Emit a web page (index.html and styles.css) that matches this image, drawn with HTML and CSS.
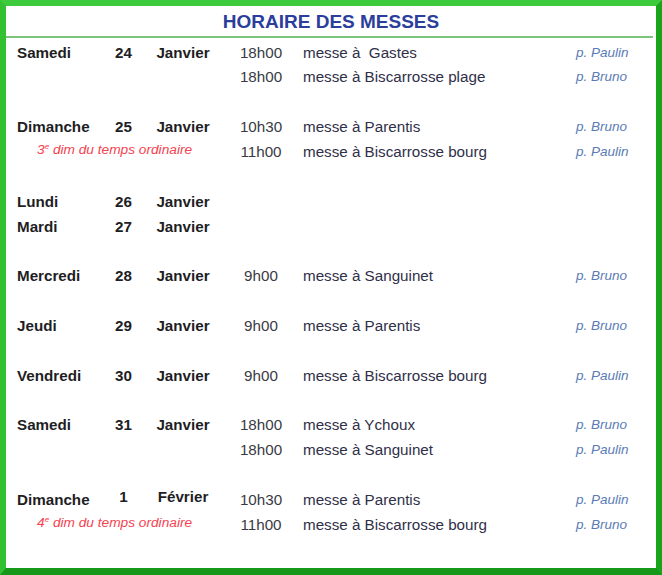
FILE: index.html
```html
<!DOCTYPE html>
<html lang="fr">
<head>
<meta charset="utf-8">
<title>Horaire des messes</title>
<link rel="stylesheet" href="styles.css">
</head>
<body>
<div class="frame">
  <h1 class="title">HORAIRE DES MESSES</h1>
  <div class="rule"></div>
  <div class="schedule">
    <div class="row"><span class="day">Samedi</span><span class="num">24</span><span class="month">Janvier</span><span class="time">18h00</span><span class="mass">messe à&nbsp; Gastes</span><span class="priest">p. Paulin</span></div>
    <div class="row"><span class="day"></span><span class="num"></span><span class="month"></span><span class="time">18h00</span><span class="mass">messe à Biscarrosse plage</span><span class="priest">p. Bruno</span></div>
    <div class="row empty"></div>
    <div class="row"><span class="day">Dimanche</span><span class="num">25</span><span class="month">Janvier</span><span class="time">10h30</span><span class="mass">messe à Parentis</span><span class="priest">p. Bruno</span></div>
    <div class="row"><span class="note">3<sup>e</sup> dim du temps ordinaire</span><span class="time">11h00</span><span class="mass">messe à Biscarrosse bourg</span><span class="priest">p. Paulin</span></div>
    <div class="row empty"></div>
    <div class="row"><span class="day">Lundi</span><span class="num">26</span><span class="month">Janvier</span></div>
    <div class="row"><span class="day">Mardi</span><span class="num">27</span><span class="month">Janvier</span></div>
    <div class="row empty"></div>
    <div class="row"><span class="day">Mercredi</span><span class="num">28</span><span class="month">Janvier</span><span class="time">9h00</span><span class="mass">messe à Sanguinet</span><span class="priest">p. Bruno</span></div>
    <div class="row empty"></div>
    <div class="row"><span class="day">Jeudi</span><span class="num">29</span><span class="month">Janvier</span><span class="time">9h00</span><span class="mass">messe à Parentis</span><span class="priest">p. Bruno</span></div>
    <div class="row empty"></div>
    <div class="row"><span class="day">Vendredi</span><span class="num">30</span><span class="month">Janvier</span><span class="time">9h00</span><span class="mass">messe à Biscarrosse bourg</span><span class="priest">p. Paulin</span></div>
    <div class="row empty"></div>
    <div class="row"><span class="day">Samedi</span><span class="num">31</span><span class="month">Janvier</span><span class="time">18h00</span><span class="mass">messe à Ychoux</span><span class="priest">p. Bruno</span></div>
    <div class="row"><span class="day"></span><span class="num"></span><span class="month"></span><span class="time">18h00</span><span class="mass">messe à Sanguinet</span><span class="priest">p. Paulin</span></div>
    <div class="row empty"></div>
    <div class="row"><span class="day">Dimanche</span><span class="num raised">1</span><span class="month raised">Février</span><span class="time">10h30</span><span class="mass">messe à Parentis</span><span class="priest">p. Paulin</span></div>
    <div class="row"><span class="note">4<sup>e</sup> dim du temps ordinaire</span><span class="time">11h00</span><span class="mass">messe à Biscarrosse bourg</span><span class="priest">p. Bruno</span></div>
  </div>
</div>
</body>
</html>
```

FILE: styles.css
```css
html, body {
  margin: 0;
  padding: 0;
  background: #ffffff;
}

.frame {
  width: 662px;
  height: 575px;
  box-sizing: border-box;
  border-style: solid;
  border-width: 6px 6px 7px 6px;
  border-color: #3dcb3d #1aa41a #16981a #33c133;
  background: #ffffff;
  font-family: "Liberation Sans", Arial, sans-serif;
  overflow: hidden;
}

.title {
  margin: 0 0 2px 0;
  padding-top: 4px;
  height: 24px;
  line-height: 24px;
  text-align: center;
  font-size: 19px;
  font-weight: bold;
  color: #2b3e9c;
}

.rule {
  height: 2px;
  margin-right: 3px;
  background: #7cc47c;
}

.schedule {
  padding: 2.6px 0 0 11px;
}

.row {
  display: grid;
  grid-template-columns: 83px 47px 72px 84px 273px 1fr;
  height: 24.85px;
  line-height: 24.85px;
  font-size: 15.2px;
  white-space: nowrap;
}

.day {
  font-weight: bold;
  color: #1e1e24;
}

.num {
  font-weight: bold;
  color: #1e1e24;
  text-align: center;
}

.month {
  font-weight: bold;
  color: #1e1e24;
  text-align: center;
}

.raised {
  margin-top: -3px;
}

.time {
  grid-column: 4;
  text-align: center;
  color: #3a3a44;
}

.mass {
  color: #302f48;
}

.priest {
  font-style: italic;
  font-size: 13.5px;
  color: #5a7bb5;
}

.note {
  grid-column: 1 / span 3;
  padding-left: 20px;
  margin-top: -2px;
  font-style: italic;
  font-size: 13.7px;
  color: #f5424f;
}

.note sup {
  font-size: 8px;
  line-height: 0;
  vertical-align: 5px;
}
```
